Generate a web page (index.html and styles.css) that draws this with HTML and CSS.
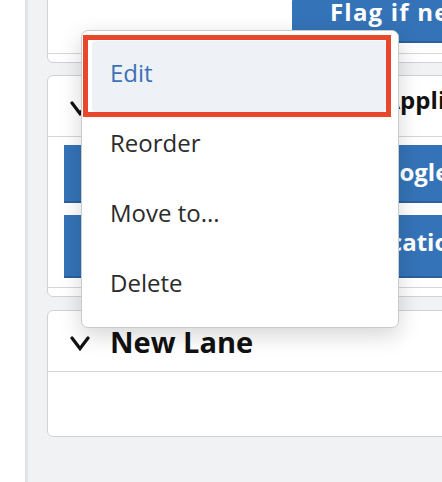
FILE: index.html
```html
<!DOCTYPE html>
<html lang="en">
<head>
<meta charset="utf-8">
<title>Lanes</title>
<link rel="stylesheet" href="styles.css">
</head>
<body>
<div class="page">
  <div class="gutter"></div>
  <div class="board">
    <div class="lanes">
      <section class="lane lane-first">
        <div class="lane-body lane-body-first">
          <div class="action action-flag">Flag if needs review</div>
        </div>
        <div class="lane-foot"></div>
      </section>

      <section class="lane">
        <header class="lane-head">
          <svg class="chev" width="20" height="17" viewBox="0 0 20 17"><polyline points="2,3 10,13.5 18,3" fill="none" stroke="#111" stroke-width="3.2" stroke-linecap="round" stroke-linejoin="miter"/></svg>
          <h2 class="lane-title lane-title-small">Vendors Onboarding – Applications</h2>
        </header>
        <div class="lane-body">
          <div class="action action-sheets">Send responses to Google Sheets</div>
          <div class="action action-tall action-slack">Send a Slack notification</div>
        </div>
        <div class="lane-foot"></div>
      </section>

      <section class="lane lane-last">
        <header class="lane-head">
          <svg class="chev" width="20" height="17" viewBox="0 0 20 17"><polyline points="2,3 10,13.5 18,3" fill="none" stroke="#111" stroke-width="3.2" stroke-linecap="round" stroke-linejoin="miter"/></svg>
          <h2 class="lane-title">New Lane</h2>
        </header>
        <div class="lane-body lane-body-empty"></div>
      </section>
    </div>
  </div>

  <ul class="menu">
    <li class="menu-item is-active">Edit</li>
    <li class="menu-item">Reorder</li>
    <li class="menu-item">Move to...</li>
    <li class="menu-item">Delete</li>
  </ul>
</div>
</body>
</html>
```

FILE: styles.css
```css
html, body {
  margin: 0;
  padding: 0;
  background: #ffffff;
  overflow: hidden;
}

body {
  font-family: "Open Sans", "Noto Sans", sans-serif;
  color: #2b2b2b;
}

.page {
  position: relative;
  display: flex;
  height: 482px;
  width: 442px;
  overflow: hidden;
}

.gutter {
  width: 25px;
  flex: none;
  background: #ffffff;
}

.board {
  flex: 1;
  min-width: 0;
  background: #f1f2f4;
  border-left: 3px solid #e1e3e6;
  padding-left: 19px;
  overflow: hidden;
}

.lanes {
  display: flex;
  flex-direction: column;
  gap: 12px;
  margin-right: -80px;
}

.lane {
  background: #ffffff;
  border: 1px solid #cfd2d6;
  border-radius: 6px;
}

.lane-first {
  margin-top: -60px;
}

.lane-last {
  margin-top: 1px;
}

.lane-head {
  display: flex;
  align-items: center;
  height: 60px;
  padding-left: 22px;
  border-bottom: 1px solid #d3d6da;
}

.chev {
  flex: none;
  margin-right: 20px;
  margin-top: 5px;
}

.lane-title {
  margin: 0;
  font-size: 29px;
  line-height: 1;
  font-weight: 700;
  color: #111111;
  white-space: nowrap;
}

.lane-title-small {
  font-size: 24px;
  letter-spacing: 0.1px;
  margin-bottom: 12px;
}

.lane-body {
  display: flex;
  flex-direction: column;
  gap: 12px;
  padding: 8px 0 9px 16px;
}

.lane-body-first {
  height: 102px;
  justify-content: flex-end;
  align-items: flex-start;
  padding: 0 0 10px 244px;
}

.lane-body-empty {
  height: 64px;
  padding: 0;
}

.lane-foot {
  height: 8px;
  border-top: 1px solid #d3d6da;
}

.action {
  background: #3473b7;
  border-bottom: 2px solid #2a5f9d;
  color: #ffffff;
  font-weight: 700;
  font-size: 24px;
  line-height: 28px;
  padding: 13px 0 15px 20px;
  white-space: nowrap;
  overflow: hidden;
}

.action-sheets {
  padding-left: 80px;
}

.action-slack {
  padding-left: 107px;
}

.action-tall {
  padding-bottom: 20px;
}

.action-flag {
  padding: 0 40px 15px 38px;
  letter-spacing: 1.2px;
  border-top-left-radius: 4px;
}

.menu {
  position: absolute;
  left: 81px;
  top: 30px;
  width: 294px;
  margin: 0;
  padding: 6px 12px 10px 10px;
  list-style: none;
  background: #ffffff;
  border: 1px solid #c8cacd;
  border-radius: 7px;
  box-shadow: 0 7px 22px rgba(0, 0, 0, 0.17);
}

.menu-item {
  position: relative;
  z-index: 0;
  display: flex;
  align-items: center;
  height: 70px;
  padding-left: 18px;
  font-size: 24px;
  color: #2b2b2b;
}

.menu-item.is-active {
  color: #3a72b6;
}

.menu-item.is-active::before {
  content: "";
  position: absolute;
  z-index: -1;
  top: 4px;
  bottom: -5px;
  left: 0;
  right: 0;
  background: #eef2f7;
  border-radius: 4px;
}

.menu-item.is-active::after {
  content: "";
  position: absolute;
  top: -2px;
  bottom: -10px;
  left: -9px;
  right: -5px;
  border: 5px solid #e8472b;
  pointer-events: none;
}
```
